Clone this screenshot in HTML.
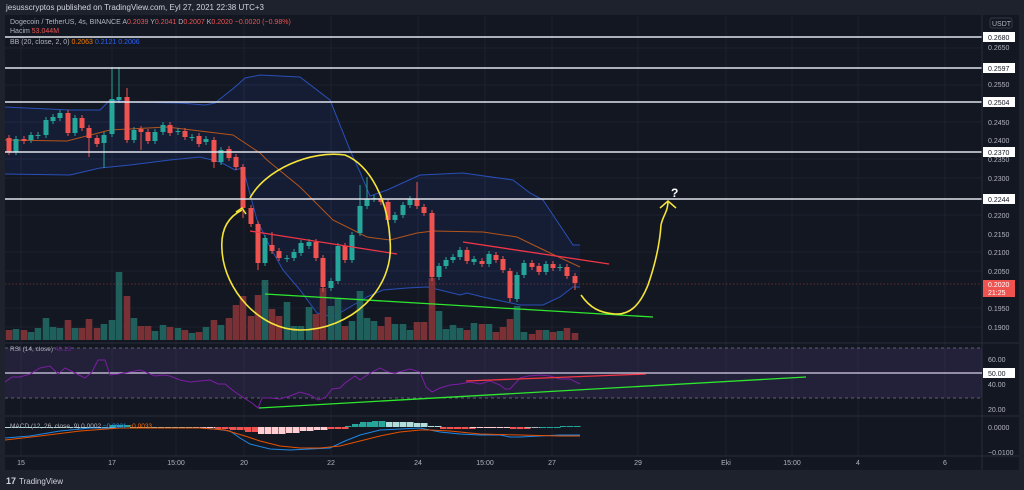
<!DOCTYPE html>
<html><head><meta charset="utf-8"><style>
html,body{margin:0;padding:0;background:#1e222d;width:1024px;height:490px;overflow:hidden;font-family:"Liberation Sans",sans-serif}
svg{display:block}
text{font-family:"Liberation Sans",sans-serif}
</style></head><body>
<svg id="s" width="1024" height="490" viewBox="0 0 1024 490" xmlns="http://www.w3.org/2000/svg">
<rect width="1024" height="490" fill="#1e222d"/>
<rect x="5" y="15" width="1014" height="455" fill="#131722"/>
<text x="6" y="10" font-size="8" fill="#d1d4dc">jesusscryptos published on TradingView.com, Eyl 27, 2021 22:38 UTC+3</text>
<g stroke="#1e2230" stroke-width="1" id="grid">
<line x1="21" y1="16" x2="21" y2="456"/><line x1="112" y1="16" x2="112" y2="456"/><line x1="176" y1="16" x2="176" y2="456"/><line x1="244" y1="16" x2="244" y2="456"/><line x1="331" y1="16" x2="331" y2="456"/><line x1="418" y1="16" x2="418" y2="456"/><line x1="485" y1="16" x2="485" y2="456"/><line x1="552" y1="16" x2="552" y2="456"/><line x1="638" y1="16" x2="638" y2="456"/><line x1="726" y1="16" x2="726" y2="456"/><line x1="792" y1="16" x2="792" y2="456"/><line x1="858" y1="16" x2="858" y2="456"/><line x1="945" y1="16" x2="945" y2="456"/>
<line x1="5" y1="48" x2="982" y2="48"/><line x1="5" y1="85" x2="982" y2="85"/><line x1="5" y1="122" x2="982" y2="122"/><line x1="5" y1="159" x2="982" y2="159"/><line x1="5" y1="178" x2="982" y2="178"/><line x1="5" y1="215" x2="982" y2="215"/><line x1="5" y1="252" x2="982" y2="252"/><line x1="5" y1="271" x2="982" y2="271"/><line x1="5" y1="308" x2="982" y2="308"/><line x1="5" y1="327" x2="982" y2="327"/>
</g>
<!-- BB fill -->
<path d="M5,107 L70,110 L100,110 L110,100 L130,102 L180,103 L205,105 L215,103 L235,87 L245,78 L260,75 L300,77 L330,100 L350,150 L360,172 L370,196 L387,190 L420,175 L463,173 L513,180 L530,193 L543,200 L573,245 L580,245 L580,287 L573,287 L560,297 L543,305 L520,305 L483,297 L467,293 L460,295 L440,290 L427,287 L407,288 L383,290 L367,297 L350,307 L333,317 L317,313 L300,290 L283,270 L270,247 L257,220 L243,168 L235,170 L220,162 L200,157 L170,160 L130,165 L100,168 L70,175 L5,174 Z" fill="#2962ff" fill-opacity="0.09"/>
<polyline fill="none" stroke="#2950b8" stroke-width="1" points="5,107 70,110 100,110 110,100 130,102 180,103 205,105 215,103 235,87 245,78 260,75 300,77 330,100 350,150 360,172 370,196 387,190 420,175 463,173 513,180 530,193 543,200 573,245 580,245"/>
<polyline fill="none" stroke="#2950b8" stroke-width="1" points="5,174 70,175 100,168 130,165 170,160 200,157 220,162 235,170 243,168 257,220 270,247 283,270 300,290 317,313 333,317 350,307 367,297 383,290 407,288 427,287 440,290 460,295 467,293 483,297 520,305 543,305 560,297 573,287 580,287"/>
<polyline fill="none" stroke="#b5541a" stroke-width="1" points="5,140 67,141 110,130 167,127 233,135 260,153 267,160 300,187 333,220 367,237 390,240 417,233 433,231 483,232 517,237 550,253 580,267"/>
<g id="vol"></g>
<g id="cdl"></g>
<!-- horizontal levels -->
<g stroke="#e0e3eb" stroke-width="1.5">
<line x1="5" y1="37" x2="982" y2="37"/><line x1="5" y1="68" x2="982" y2="68"/><line x1="5" y1="102" x2="982" y2="102"/><line x1="5" y1="152" x2="982" y2="152"/><line x1="5" y1="199" x2="982" y2="199"/>
</g>
<line x1="5" y1="284" x2="982" y2="284" stroke="#ef5350" stroke-width="0.6" stroke-dasharray="1.5,2" opacity="0.7"/>
<!-- trendlines -->
<line x1="250" y1="231" x2="397" y2="254" stroke="#f23645" stroke-width="1.3"/>
<line x1="463" y1="242" x2="609" y2="264" stroke="#f23645" stroke-width="1.3"/>
<line x1="265" y1="294" x2="653" y2="317" stroke="#2ee82e" stroke-width="1.3"/>
<!-- yellow annotations -->
<path d="M242,210 C232,215 220,225 222,250 C224,290 260,330 300,330 C350,330 395,290 390,240 C388,200 370,165 345,155 C310,150 265,170 250,198" fill="none" stroke="#f5e43a" stroke-width="1.6"/>
<path d="M236,212 L242,208 L246,214" fill="none" stroke="#f5e43a" stroke-width="1.5"/>
<path d="M581,295 C590,308 600,313 615,314 C630,315 640,305 648,285 C656,262 660,240 661,225 C663,215 668,212 668,201" fill="none" stroke="#f5e43a" stroke-width="1.6"/>
<path d="M660,208 L668,201 L676,208" fill="none" stroke="#f5e43a" stroke-width="1.5"/>
<text x="671" y="197" font-size="12" font-weight="bold" fill="#ffffff">?</text>
<!-- legend -->
<text x="10" y="24" font-size="7" fill="#b2b5be">Dogecoin / TetherUS, 4s, BINANCE <tspan>A</tspan><tspan fill="#ef5350">0.2039</tspan> Y<tspan fill="#ef5350">0.2041</tspan> D<tspan fill="#ef5350">0.2007</tspan> K<tspan fill="#ef5350">0.2020 −0.0020 (−0.98%)</tspan></text>
<text x="10" y="33" font-size="7" fill="#b2b5be">Hacim <tspan fill="#ef5350">53.044M</tspan></text>
<text x="10" y="44" font-size="7" fill="#b2b5be">BB (20, close, 2, 0) <tspan fill="#f57c00">0.2063</tspan> <tspan fill="#2962ff">0.2121</tspan> <tspan fill="#2962ff">0.2006</tspan></text>
<!-- pane separators -->
<line x1="5" y1="343" x2="1019" y2="343" stroke="#2a2e39"/>
<line x1="5" y1="416" x2="1019" y2="416" stroke="#2a2e39"/>
<line x1="5" y1="456" x2="1019" y2="456" stroke="#2a2e39"/>
<line x1="982" y1="15" x2="982" y2="470" stroke="#2a2e39"/>
<!-- RSI -->
<rect x="5" y="348" width="977" height="50" fill="#7e57c2" fill-opacity="0.15"/>
<line x1="5" y1="348" x2="982" y2="348" stroke="#787b86" stroke-dasharray="3,3" stroke-width="0.8"/>
<line x1="5" y1="398" x2="982" y2="398" stroke="#787b86" stroke-dasharray="3,3" stroke-width="0.8"/>
<line x1="5" y1="373" x2="982" y2="373" stroke="#d7cfe8" stroke-width="1.2"/>
<polyline fill="none" stroke="#7b1fa2" stroke-width="1" points="5,382 12,377 20,377 30,374 40,368 50,366 58,374 65,368 75,373 85,378 92,372 98,360 105,360 110,375 118,374 130,372 140,370 148,373 155,376 163,375 170,376 180,380 190,382 200,381 210,380 218,384 225,384 235,392 244,398 252,403 258,408 262,398 270,398 280,399 290,396 300,392 310,395 318,400 325,398 332,389 340,388 345,383 355,376 360,380 370,373 380,368 388,372 395,373 410,369 420,372 426,387 432,392 440,388 450,385 460,384 470,382 480,384 490,381 500,385 505,389 510,389 520,378 528,376 540,375 550,376 560,379 570,379 580,384"/>
<line x1="466" y1="381" x2="646" y2="374" stroke="#f23645" stroke-width="1.3"/>
<line x1="259" y1="408" x2="806" y2="377" stroke="#2ee82e" stroke-width="1.3"/>
<text x="10" y="351" font-size="6.5" fill="#b2b5be">RSI (14, close) <tspan fill="#7b1fa2">48.13</tspan></text>
<!-- MACD -->
<g id="hist"></g>
<polyline fill="none" stroke="#1e88e5" stroke-width="1" points="5,438 30,436 60,431 90,428 120,428 200,428 215,429 230,431 240,438 250,444 270,449 290,450 310,449 330,448 345,441 360,435 380,430 400,429 420,428 440,432 460,434 480,435 500,435 510,437 520,437 540,436 560,435 580,435"/>
<polyline fill="none" stroke="#e65100" stroke-width="1" points="5,440 40,436 80,431 120,428 200,428 225,430 245,436 260,441 280,446 300,448 320,448 340,446 360,441 380,436 400,432 420,430 430,430 450,431 480,434 520,435 560,436 580,436"/>
<text x="10" y="428" font-size="6.5" fill="#b2b5be">MACD (12, 26, close, 9) <tspan fill="#b2b5be">0.0002</tspan> <tspan fill="#2196f3">−0.0031</tspan> <tspan fill="#ff6d00">−0.0033</tspan></text>
<!-- time axis -->
<g font-size="7" fill="#b2b5be" text-anchor="middle">
<text x="21" y="465">15</text><text x="112" y="465">17</text><text x="176" y="465">15:00</text><text x="244" y="465">20</text><text x="331" y="465">22</text><text x="418" y="465">24</text><text x="485" y="465">15:00</text><text x="552" y="465">27</text><text x="638" y="465">29</text><text x="726" y="465">Eki</text><text x="792" y="465">15:00</text><text x="858" y="465">4</text><text x="945" y="465">6</text>
</g>
<!-- price axis -->
<g font-size="7" fill="#b2b5be">
<text x="988" y="50">0.2650</text><text x="988" y="87">0.2550</text><text x="988" y="125">0.2450</text><text x="988" y="143">0.2400</text><text x="988" y="162">0.2350</text><text x="988" y="181">0.2300</text><text x="988" y="218">0.2200</text><text x="988" y="237">0.2150</text><text x="988" y="255">0.2100</text><text x="988" y="274">0.2050</text><text x="988" y="311">0.1950</text><text x="988" y="330">0.1900</text>
<text x="988" y="362">60.00</text><text x="988" y="387">40.00</text><text x="988" y="412">20.00</text>
<text x="988" y="430">0.0000</text><text x="988" y="455">−0.0100</text>
</g>
<rect x="990" y="18" width="22" height="10" rx="2" fill="#131722" stroke="#434651" stroke-width="0.7"/>
<text x="992" y="26" font-size="7" fill="#b2b5be">USDT</text>
<g font-size="7" fill="#131722">
<rect x="983" y="32" width="32" height="10" fill="#fff"/><text x="988" y="40">0.2680</text>
<rect x="983" y="63" width="32" height="10" fill="#fff"/><text x="988" y="71">0.2597</text>
<rect x="983" y="97" width="32" height="10" fill="#fff"/><text x="988" y="105">0.2504</text>
<rect x="983" y="147" width="32" height="10" fill="#fff"/><text x="988" y="155">0.2370</text>
<rect x="983" y="194" width="32" height="10" fill="#fff"/><text x="988" y="202">0.2244</text>
<rect x="983" y="368" width="32" height="10" fill="#fff"/><text x="988" y="376">50.00</text>
</g>
<rect x="983" y="280" width="32" height="17" fill="#ef5350"/>
<text x="988" y="287" font-size="7" fill="#fff">0.2020</text>
<text x="988" y="295" font-size="7" fill="#fff">21:25</text>
<!-- footer -->
<text x="6" y="484" font-size="9" font-weight="bold" fill="#d1d4dc">17</text>
<text x="19" y="484" font-size="8" fill="#d1d4dc">TradingView</text>
</svg>
<script>
var C=[[9,138,152,'r'],[16,139,152,'g'],[24,139,141,'r'],[31,135,140,'g'],[38,135,136,'g'],[46,120,135,'g'],[53,117,121,'g'],[60,113,118,'g'],[68,113,133,'r'],[75,118,133,'g'],[82,118,128,'r'],[89,128,138,'r'],[97,138,144,'r'],[104,135,143,'g'],[112,99,134,'g'],[119,97,100,'g'],[127,97,140,'r'],[134,130,140,'g'],[141,129,132,'r'],[148,132,141,'r'],[155,132,141,'g'],[163,125,132,'g'],[170,125,133,'r'],[178,131,132,'g'],[185,131,137,'r'],[192,137,138,'g'],[199,136,144,'r'],[206,139,142,'g'],[214,140,162,'r'],[221,150,162,'g'],[229,149,158,'r'],[236,157,167,'r'],[243,167,208,'r'],
[251,208,224,'r'],[258,224,263,'r'],[265,238,263,'g'],[272,245,251,'r'],[279,251,258,'r'],[287,258,259,'g'],[294,252,258,'g'],[301,243,253,'g'],[309,242,246,'g'],[316,242,258,'r'],[323,258,287,'r'],[331,281,288,'g'],[338,246,281,'g'],[345,246,260,'r'],[352,235,260,'g'],[360,206,233,'g'],[367,199,206,'g'],[374,198,199,'g'],[381,198,202,'r'],[388,202,220,'r'],[395,215,220,'g'],[403,205,215,'g'],[410,199,205,'g'],[417,199,206,'r'],[424,207,213,'r'],[432,213,277,'r'],[439,266,277,'g'],[446,260,266,'g'],[453,257,260,'g'],[460,250,257,'g'],[467,250,261,'r'],[474,259,262,'g'],[482,261,264,'r'],[489,254,264,'g'],[496,255,260,'r'],[503,259,270,'r'],[510,271,298,'r'],[517,275,299,'g'],[524,263,275,'g'],[532,263,267,'r'],[539,266,272,'r'],[546,264,272,'g'],[553,264,268,'r'],[560,267,268,'g'],[567,267,276,'r'],[575,276,283,'r']];
var V=[330,329,330,332,328,318,327,328,320,328,328,319,328,324,320,272,296,318,326,326,331,325,327,328,330,333,332,327,320,325,318,305,296,316,295,280,309,316,302,326,326,307,314,288,306,299,326,321,291,318,321,326,317,324,324,330,322,322,278,311,329,325,328,330,323,324,324,332,327,319,306,332,334,330,330,332,331,328,333];
var W={89:157,104:168,112:67,119:67,127:88,141:150,214:168,243:218,258:270,272:232,360:185,367:177,417:182,432:281,510:302,575:290,323:292};
var ns='http://www.w3.org/2000/svg',cg=document.getElementById('cdl'),vg=document.getElementById('vol');
function el(t,a,p){var e=document.createElementNS(ns,t);for(var k in a)e.setAttribute(k,a[k]);p.appendChild(e);}
C.forEach(function(c,i){var col=c[3]=='g'?'#26a69a':'#ef5350';
var wt=c[1]-3,wb=c[2]+3;if(W[c[0]]){if(W[c[0]]<c[1])wt=W[c[0]];else wb=W[c[0]];}
el('line',{x1:c[0],x2:c[0],y1:wt,y2:wb,stroke:col,'stroke-width':1},cg);
el('rect',{x:c[0]-2.5,y:c[1],width:5,height:Math.max(1,c[2]-c[1]),fill:col},cg);
var v=V[i]||330;el('rect',{x:c[0]-3.3,y:v,width:6.6,height:340-v,fill:c[3]=='g'?'#1f5f5c':'#7a3136'},vg);});
var hg=document.getElementById('hist');
var H=[[5,1,'#b2dfdb'],[60,1,'#b2dfdb'],[110,-2,'#26a69a'],[130,1,'#b2dfdb'],[200,1,'#ffcdd2'],[215,2,'#ef5350'],[230,3,'#ef5350'],[245,5,'#ef5350'],[258,7,'#ffcdd2'],[272,7,'#ffcdd2'],[286,6,'#ffcdd2'],[300,4,'#ffcdd2'],[314,3,'#ffcdd2'],[328,2,'#ef5350'],[345,-1,'#26a69a'],[352,-3,'#26a69a'],[360,-5,'#26a69a'],[372,-6,'#26a69a'],[386,-5,'#b2dfdb'],[400,-5,'#b2dfdb'],[414,-4,'#b2dfdb'],[428,-1,'#b2dfdb'],[440,2,'#ef5350'],[455,2,'#ef5350'],[470,1,'#ffcdd2'],[490,1,'#ffcdd2'],[510,2,'#ef5350'],[525,1,'#b2b5be'],[540,1,'#26a69a'],[560,-1,'#26a69a'],[575,1,'#b2dfdb']];
var z=427;for(var i=0;i<H.length-1;i++){for(var x=H[i][0];x<H[i+1][0];x+=7){var h=H[i][1];el('rect',{x:x,y:h<0?z+h:z,width:6.5,height:Math.max(1,Math.abs(h)),fill:H[i][2]},hg);}}
</script>
</body></html>
